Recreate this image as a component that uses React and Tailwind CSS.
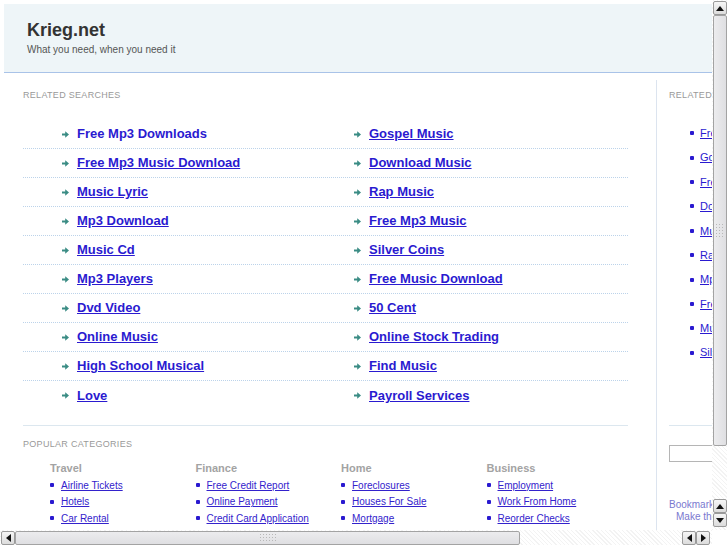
const related = [
  ['Free Mp3 Downloads', 'Gospel Music'],
  ['Free Mp3 Music Download', 'Download Music'],
  ['Music Lyric', 'Rap Music'],
  ['Mp3 Download', 'Free Mp3 Music'],
  ['Music Cd', 'Silver Coins'],
  ['Mp3 Players', 'Free Music Download'],
  ['Dvd Video', '50 Cent'],
  ['Online Music', 'Online Stock Trading'],
  ['High School Musical', 'Find Music'],
  ['Love', 'Payroll Services'],
]

const categories = [
  { title: 'Travel', links: ['Airline Tickets', 'Hotels', 'Car Rental'] },
  { title: 'Finance', links: ['Free Credit Report', 'Online Payment', 'Credit Card Application'] },
  { title: 'Home', links: ['Foreclosures', 'Houses For Sale', 'Mortgage'] },
  { title: 'Business', links: ['Employment', 'Work From Home', 'Reorder Checks'] },
]

const sideLinks = [
  'Free Mp3 Downloads',
  'Gospel Music',
  'Free Mp3 Music Download',
  'Download Music',
  'Music Lyric',
  'Rap Music',
  'Mp3 Download',
  'Free Mp3 Music',
  'Music Cd',
  'Silver Coins',
]

// ------------------------------
// Small pieces
// ------------------------------

function Arrow() {
  return (
    <svg width="7" height="7" viewBox="0 0 7 7" className="shrink-0">
      <path d="M0 2.5h3.2V0.3L7 3.5 3.2 6.7V4.5H0z" fill="#3a8c84" />
    </svg>
  )
}

function Bullet() {
  return <span className="inline-block w-[4px] h-[4px] rounded-[1px] bg-[#2a1ad0] shrink-0" />
}

function RelatedLink({ text, plain }) {
  return (
    <div className="flex items-center gap-[8px] w-[292px] shrink-0">
      <Arrow />
      <a
        href="#"
        className={`text-[13px] font-bold text-[#2a1ad0] ${plain ? 'no-underline' : 'underline'}`}
      >
        {text}
      </a>
    </div>
  )
}

function Triangle({ dir }) {
  if (dir === 'left' || dir === 'right') {
    return (
      <svg width="5" height="8" viewBox="0 0 5 8">
        <path d={dir === 'left' ? 'M5 0V8L0 4z' : 'M0 0V8L5 4z'} fill="#111" />
      </svg>
    )
  }
  return (
    <svg width="8" height="5" viewBox="0 0 8 5">
      <path d={dir === 'up' ? 'M0 5L4 0 8 5z' : 'M0 0L8 0 4 5z'} fill="#111" />
    </svg>
  )
}

function SButton({ dir }) {
  return (
    <div className="w-[14px] h-[14px] shrink-0 rounded-[2px] border border-[#9a9a9a] bg-gradient-to-b from-[#f6f6f6] to-[#dcdcdc] flex items-center justify-center">
      <Triangle dir={dir} />
    </div>
  )
}

function Grip({ vertical }) {
  return (
    <div
      className={`${vertical ? 'w-[10px] h-[16px]' : 'w-[18px] h-[9px]'} bg-[radial-gradient(#b8b8b8_0.7px,transparent_0.8px)] bg-[length:3px_3px]`}
    />
  )
}

// ------------------------------
// Page
// ------------------------------

function Page() {
  return (
    <div className="w-[800px] pt-[4px] pl-[4px] font-['Liberation_Sans',Arial,sans-serif]">
      {/* Header */}
      <div className="h-[69px] bg-[#eef5f8] border-b border-[#a9c3e8] pl-[23px] pt-[15px]">
        <h1 className="text-[18px] leading-[22px] font-bold text-[#333]">Krieg.net</h1>
        <p className="text-[10px] leading-[12px] mt-[3px] text-[#555]">What you need, when you need it</p>
      </div>

      <div className="flex">
        {/* Main column */}
        <div className="ml-[19px] w-[605px] pt-[16px]">
          <p className="text-[9px] leading-[12px] tracking-[0.3px] text-[#999]">RELATED SEARCHES</p>

          <div className="mt-[19px] pb-[15px] border-b border-[#dce7ef]">
            {related.map((row, i) => (
              <div
                key={i}
                className={`flex items-center h-[29px] pl-[39px] ${i < related.length - 1 ? 'border-b border-dotted border-[#bcd3ea]' : ''}`}
              >
                <RelatedLink text={row[0]} plain={i === 0} />
                <RelatedLink text={row[1]} />
              </div>
            ))}
          </div>

          <p className="mt-[12px] text-[9px] leading-[12px] tracking-[0.3px] text-[#999]">POPULAR CATEGORIES</p>

          <div className="flex pl-[27px] mt-[12px]">
            {categories.map((c) => (
              <div key={c.title} className="w-[145.5px] shrink-0">
                <p className="text-[11px] leading-[13px] font-bold text-[#a3a3a3]">{c.title}</p>
                <ul className="mt-[2px]">
                  {c.links.map((l) => (
                    <li key={l} className="flex items-center gap-[7px] h-[16.5px]">
                      <Bullet />
                      <a href="#" className="text-[10px] text-[#3322cc] underline">{l}</a>
                    </li>
                  ))}
                </ul>
              </div>
            ))}
          </div>
        </div>

        {/* Sidebar */}
        <div className="ml-[28px] mt-[7px] w-[150px] border-l border-[#dce4ef] pl-[12px] pt-[9px] h-[460px]">
          <p className="text-[9px] leading-[12px] tracking-[0.3px] text-[#999]">RELATED</p>
          <ul className="mt-[20px] pl-[21px]">
            {sideLinks.map((l) => (
              <li key={l} className="flex items-center gap-[6px] h-[24.4px] whitespace-nowrap">
                <Bullet />
                <a href="#" className="text-[11px] text-[#2a1ad0] underline">{l}</a>
              </li>
            ))}
          </ul>
          <div className="mt-[60px] border-t border-[#dce7ef]" />
          <input className="mt-[19px] w-[120px] h-[17px] border border-[#b5b5b5] bg-white outline-none block" />
          <p className="mt-[37px] text-[10px] leading-[12px] text-[#7a78d0] whitespace-nowrap">Bookmark this page</p>
          <p className="pl-[7px] text-[10px] leading-[12px] text-[#7a78d0] whitespace-nowrap">Make this your homepage</p>
        </div>
      </div>
    </div>
  )
}

export default function App() {
  return (
    <div className="w-[727px] h-[545px] overflow-hidden bg-white flex flex-col">
      <div className="flex h-[530px]">
        <div className="w-[712px] h-[530px] overflow-hidden">
          <Page />
        </div>
        {/* Vertical scrollbar */}
        <div className="w-[15px] h-[530px] flex flex-col items-center pt-[1px] bg-[repeating-linear-gradient(45deg,#f3f3f3_0_1px,#ffffff_1px_3px)]">
          <SButton dir="up" />
          <div className="w-[14px] h-[431px] rounded-[2px] border border-[#a3a3a3] bg-gradient-to-r from-[#ececee] to-[#dfdfe2] flex items-center justify-center">
            <Grip vertical />
          </div>
          <div className="flex-1" />
          <SButton dir="up" />
          <SButton dir="down" />
          <div className="h-[3px]" />
        </div>
      </div>
      {/* Horizontal scrollbar */}
      <div className="flex h-[15px]">
        <div className="w-[712px] flex items-center pl-[1px] bg-[repeating-linear-gradient(45deg,#f3f3f3_0_1px,#ffffff_1px_3px)]">
          <SButton dir="left" />
          <div className="w-[505px] h-[14px] rounded-[2px] border border-[#a3a3a3] bg-gradient-to-b from-[#ececee] to-[#dfdfe2] flex items-center justify-center">
            <Grip />
          </div>
          <div className="flex-1" />
          <SButton dir="left" />
          <SButton dir="right" />
          <div className="w-[2px]" />
        </div>
        <div className="w-[15px] bg-white" />
      </div>
    </div>
  )
}
